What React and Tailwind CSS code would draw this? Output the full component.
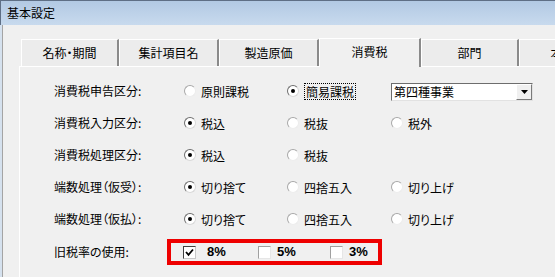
import React from "react";

function Radio({ checked }) {
  return (
    <span
      className={
        "inline-flex w-[12px] h-[12px] rounded-full border bg-white items-center justify-center shrink-0 " +
        (checked
          ? "border-t-[#6e6e6e] border-l-[#6e6e6e] border-r-[#d8d8d8] border-b-[#d8d8d8]"
          : "border-t-[#a8a8a8] border-l-[#a8a8a8] border-r-[#ececec] border-b-[#ececec]")
      }
    >
      {checked && <span className="w-[4px] h-[4px] rounded-full bg-black" />}
    </span>
  );
}

function Opt({ checked, label, focus }) {
  return (
    <div className="flex items-center">
      <Radio checked={checked} />
      <span
        className={
          "ml-[5px] leading-[15px] " +
          (focus ? "border border-dotted border-black px-px -ml-px" : "")
        }
      >
        {label}
      </span>
    </div>
  );
}

function Check({ checked }) {
  return (
    <span
      className={
        "inline-flex w-[13px] h-[13px] border bg-white items-center justify-center shrink-0 " +
        (checked
          ? "border-t-[#404040] border-l-[#404040] border-r-[#c8c8c8] border-b-[#c8c8c8]"
          : "border-t-[#a0a0a0] border-l-[#a0a0a0] border-r-[#e6e6e6] border-b-[#e6e6e6]")
      }
    >
      {checked && (
        <svg width="9" height="9" viewBox="0 0 9 9">
          <path d="M1 4 L3.5 6.8 L8 1.5" stroke="#000" strokeWidth="1.8" fill="none" />
        </svg>
      )}
    </span>
  );
}

function Row({ label, children, className = "" }) {
  return (
    <div className={"grid grid-cols-[130px_103px_104px_1fr] h-[32px] items-center " + className}>
      <div>{label}</div>
      {children}
    </div>
  );
}

function Tab({ label, w, selected }) {
  return (
    <div
      className={
        "flex items-center justify-center border-l border-t border-r-2 border-l-white border-t-white border-r-[#8a8a8a] shrink-0 " +
        (selected ? "h-[29px] bg-[#f0f0f0] pb-[3px] relative -mb-px z-10" : "h-[27px] bg-[#ececec]")
      }
      style={{ width: w }}
    >
      {label}
    </div>
  );
}

export default function App() {
  return (
    <div className="w-[555px] h-[277px] overflow-hidden bg-[#f0f0f0] text-[12px] text-black font-['Noto_Sans_CJK_JP','Noto_Sans',sans-serif] [font-feature-settings:'palt'] flex flex-col">
      <div className="h-[25px] shrink-0 border-t border-l border-[#5f6f85] bg-gradient-to-b from-[#b2c9e3] to-[#c8daee] flex items-center pl-[6px]">
        基本設定
      </div>
      <div className="flex-1 flex min-h-0">
        <div className="w-[3px] shrink-0 bg-[#d5e1ee] border-r border-[#a4a4a4]" />
        <div className="flex-1 pl-[16px] pt-[12px] flex flex-col min-w-0">
          <div className="flex items-end h-[29px] pl-[2px]">
            <Tab label="名称・期間" w={98} />
            <Tab label="集計項目名" w={100} />
            <Tab label="製造原価" w={100} />
            <Tab label="消費税" w={102} selected />
            <Tab label="部門" w={98} />
            <Tab label="本支店" w={100} />
          </div>
          <div className="flex-1 border-t border-l border-white bg-[#f0f0f0] pl-[34px] pt-[8px]">
            <Row label="消費税申告区分:">
              <Opt label="原則課税" />
              <Opt label="簡易課税" checked focus />
              <div className="flex items-center mt-[2px]">
                <div className="w-[142px] h-[18px] bg-white border border-t-[#6d6d6d] border-l-[#6d6d6d] border-r-[#e2e2e2] border-b-[#e2e2e2] flex items-center">
                  <span className="flex-1 pl-[2px] leading-[14px]">第四種事業</span>
                  <span className="w-[16px] h-[16px] bg-[#f0f0f0] border border-t-white border-l-white border-r-[#7a7a7a] border-b-[#7a7a7a] flex items-center justify-center">
                    <svg width="7" height="4" viewBox="0 0 7 4">
                      <path d="M0 0 H7 L3.5 4 Z" fill="#000" />
                    </svg>
                  </span>
                </div>
              </div>
            </Row>
            <Row label="消費税入力区分:">
              <Opt label="税込" checked />
              <Opt label="税抜" />
              <Opt label="税外" />
            </Row>
            <Row label="消費税処理区分:">
              <Opt label="税込" checked />
              <Opt label="税抜" />
            </Row>
            <Row label="端数処理（仮受）:">
              <Opt label="切り捨て" checked />
              <Opt label="四捨五入" />
              <Opt label="切り上げ" />
            </Row>
            <Row label="端数処理（仮払）:">
              <Opt label="切り捨て" checked />
              <Opt label="四捨五入" />
              <Opt label="切り上げ" />
            </Row>
            <div className="flex items-center h-[32px] mt-[1px]">
              <div className="w-[113px]">旧税率の使用:</div>
              <div className="w-[215px] h-[26px] border-[4px] border-[#ee0000] flex items-center pl-[12px]">
                <div className="w-[75px] flex items-center">
                  <Check checked />
                  <span className="ml-[11px] font-['Liberation_Sans',sans-serif] font-semibold text-[13px]">8%</span>
                </div>
                <div className="w-[72px] flex items-center">
                  <Check />
                  <span className="ml-[6px] font-['Liberation_Sans',sans-serif] font-semibold text-[13px]">5%</span>
                </div>
                <div className="flex items-center">
                  <Check />
                  <span className="ml-[6px] font-['Liberation_Sans',sans-serif] font-semibold text-[13px]">3%</span>
                </div>
              </div>
            </div>
          </div>
        </div>
      </div>
    </div>
  );
}
